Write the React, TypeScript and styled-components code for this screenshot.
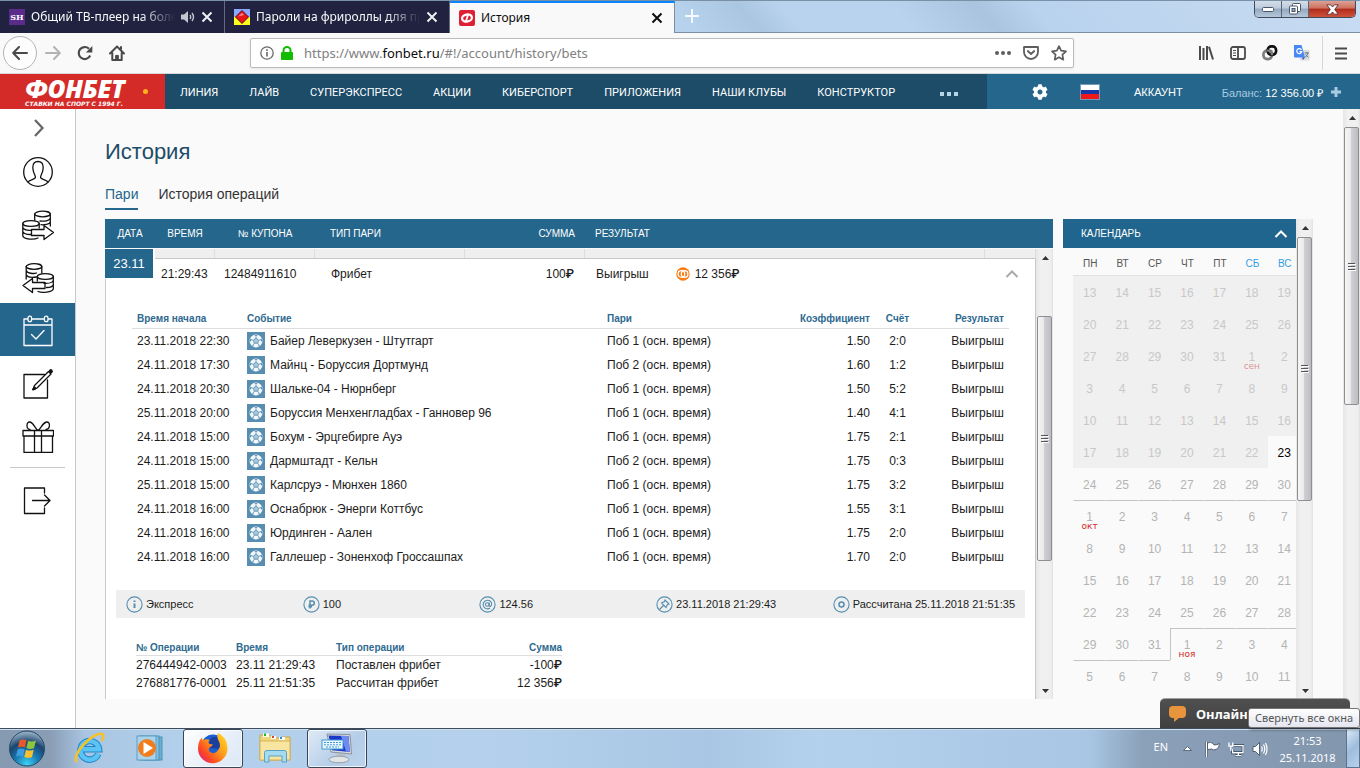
import React from "react";
import styled, { createGlobalStyle, css } from "styled-components";
import { FaCog } from "react-icons/fa";

const SANS = '"Liberation Sans", Arial, sans-serif';
const UI = '"Noto Sans", "Open Sans", sans-serif';
const BLUE = "#25668c";
const NAVY = "#1c4c68";

const Global = createGlobalStyle`
  *, *::before, *::after { box-sizing: border-box; }
  html, body { margin: 0; padding: 0; }
  body { font-family: ${SANS}; font-size: 12px; color: #1c1c1c; background: #fafafa; }
  button { font: inherit; color: inherit; background: none; border: 0; padding: 0; margin: 0; }
  a { color: inherit; text-decoration: none; }
  table { border-spacing: 0; border-collapse: separate; table-layout: fixed; width: 100%; }
  th, td { padding: 0; font-weight: normal; text-align: left; }
  svg { display: block; flex: none; }
`;

const Screen = styled.div`
  display: flex;
  flex-direction: column;
  height: 100vh;
  overflow: hidden;
`;

/* ---------- browser window ---------- */

const TabStrip = styled.header`
  display: flex;
  flex: none;
  height: 33px;
  border-top: 1px solid #7990a6;
  background: linear-gradient(48deg, #b7d2ed 0 38%, #a9c4df 45%, #b7d2ed 47% 50%, #abc6e0 55%, #b9d3ee 58% 66%, #aac4e0 72%, #b9d2ed 76%, #c8dcf2 100%);
`;

const BrowserTab = styled.div<{ $active?: boolean }>`
  display: flex;
  align-items: center;
  gap: 6px;
  width: 225px;
  padding: 0 11px 0 9px;
  font-family: ${UI};
  font-size: 12px;
  color: ${(p) => (p.$active ? "#0c0c0d" : "#f9f9fa")};
  background: ${(p) => (p.$active ? "#f9f9f9" : "#20223f")};
  border-right: 1px solid ${(p) => (p.$active ? "#7c8fa5" : "#666a80")};
  border-top: ${(p) => (p.$active ? "2px solid #0a84ff" : "0")};
`;

const TabTitle = styled.span<{ $fade?: boolean }>`
  flex: 1;
  min-width: 0;
  overflow: hidden;
  white-space: nowrap;
  line-height: 20px;
  ${(p) => p.$fade && css`mask-image: linear-gradient(to left, transparent, #000 34px);`}
`;

const IconButton = styled.button`
  display: flex;
  align-items: center;
  justify-content: center;
  flex: none;
`;

const StripRest = styled.div`
  display: flex;
  flex: 1;
  justify-content: space-between;
  align-items: flex-start;
  padding: 0 4px 0 9px;
  border-bottom: 1px solid #7c8fa5;
`;

const NewTab = styled(IconButton)`
  width: 16px;
  height: 30px;
`;

const WindowButtons = styled.div`
  display: flex;
  height: 17px;
  border: 1px solid #3f4b5a;
  border-top: 0;
  border-radius: 0 0 5px 5px;
  overflow: hidden;
`;

const WindowButton = styled.button<{ $close?: boolean }>`
  display: flex;
  align-items: center;
  justify-content: center;
  width: ${(p) => (p.$close ? "46px" : "27px")};
  border-right: ${(p) => (p.$close ? "0" : "1px solid #5a6676")};
  background: ${(p) =>
    p.$close
      ? "linear-gradient(#dba295, #cf6f5f 45%, #b02c1c 50%, #d0523a)"
      : "linear-gradient(#d3dde9, #bccbdc 45%, #94a8bf 50%, #b5c7da)"};
`;

const Toolbar = styled.div`
  display: flex;
  align-items: center;
  flex: none;
  height: 41px;
  padding: 0 13px 0 3px;
  background: #f9f9f9;
  border-bottom: 1px solid #d4d6d8;
`;

const NavButtons = styled.div`
  display: flex;
  align-items: center;
  gap: 16px;
  margin-right: 125px;
`;

const BackButton = styled(IconButton)`
  width: 34px;
  height: 34px;
  margin-right: -8px;
  border: 1px solid #b4b4b4;
  border-radius: 50%;
  background: #fdfdfd;
`;

const UrlField = styled.div`
  display: flex;
  align-items: center;
  flex: 1;
  height: 30px;
  padding: 0 6px 0 9px;
  background: #fff;
  border: 1px solid #bcbcbc;
  border-radius: 2px;
  box-shadow: 0 1px 3px rgba(0, 0, 0, 0.08);
`;

const UrlText = styled.span`
  flex: 1;
  margin-left: 6px;
  font-family: ${UI};
  font-size: 13px;
  line-height: 20px;
  color: #808080;
  b { font-weight: normal; color: #0c0c0d; }
`;

const FieldIcons = styled.div`
  display: flex;
  align-items: center;
  gap: 12px;
`;

const ToolIcons = styled.div`
  display: flex;
  align-items: center;
  gap: 16px;
  margin-left: 124px;
`;

const ToolDivider = styled.i`
  width: 1px;
  height: 34px;
  margin: 0 -4px;
  background: #d7d7db;
`;

/* ---------- site header ---------- */

const SiteBar = styled.nav`
  display: flex;
  flex: none;
  height: 35px;
  font-family: Roboto, ${SANS};
  font-size: 11px;
  color: #fff;
  background: ${NAVY};
`;

const Logo = styled.a`
  display: flex;
  align-items: center;
  gap: 15px;
  width: 165px;
  padding-left: 25px;
  background: #d52b28;
`;

const LogoText = styled.span`
  display: flex;
  flex-direction: column;
  width: 103px;
  white-space: nowrap;
  strong { font: italic 900 25px/24px ${UI}; }
  small { font: italic bold 6px/8px "DejaVu Sans", sans-serif; }
`;

const LogoDot = styled.i`
  width: 5px;
  height: 5px;
  border-radius: 50%;
  background: #ffb01e;
`;

const Menu = styled.div`
  display: flex;
  flex: 1;
  align-items: center;
  gap: 31px;
  padding: 1px 15px 0;
  white-space: nowrap;
`;

const MoreButton = styled(IconButton)`
  margin: 4px 0 0 14px;
`;

const AccountBar = styled.div`
  display: flex;
  align-items: center;
  width: 373px;
  padding: 1px 18px 0 45px;
  white-space: nowrap;
  font-family: ${SANS};
  background: ${BLUE};
`;

const AccountLink = styled.a`
  margin: 0 39px 0 34px;
`;

const Flag = styled.button`
  width: 20px;
  height: 16px;
  margin-left: 32px;
  border: 1px solid #6f9cb8;
  background: linear-gradient(#fff 0 33%, #1739a6 33% 66%, #f01818 66%);
`;

const Balance = styled.span`
  margin-right: 8px;
  color: #a9cbe0;
  b { font-weight: normal; color: #fff; }
`;

/* ---------- page ---------- */

const Page = styled.div`
  display: flex;
  flex: 1;
  min-height: 0;
`;

const Sidebar = styled.aside`
  display: flex;
  flex-direction: column;
  flex: none;
  width: 76px;
  background: #fff;
  border-right: 1px solid #c8c8c8;
`;

const SideButton = styled.button<{ $active?: boolean; $short?: boolean }>`
  display: flex;
  align-items: center;
  justify-content: center;
  height: ${(p) => (p.$short ? "35px" : "53px")};
  padding-top: 2px;
  color: ${(p) => (p.$active ? "#fff" : "#111")};
  background: ${(p) => (p.$active ? BLUE : "transparent")};
`;

const SideRule = styled.hr`
  width: 55px;
  margin: 5px 10px;
  border: 0;
  border-top: 1px solid #c8c8c8;
`;

const Content = styled.main`
  display: flex;
  flex: 1;
  flex-direction: column;
  min-width: 0;
  padding: 28px 30px 29px 29px;
  background: #fafafa;
`;

const Title = styled.h1`
  margin: 0;
  font-size: 22px;
  line-height: 30px;
  font-weight: normal;
  color: ${NAVY};
`;

const PageTabs = styled.div`
  display: flex;
  gap: 20px;
  height: 27px;
  margin: 16px 0 9px;
`;

const PageTab = styled.a<{ $active?: boolean }>`
  font-size: 14px;
  line-height: 22px;
  color: ${(p) => (p.$active ? BLUE : "#333")};
  border-bottom: ${(p) => (p.$active ? `2px solid ${BLUE}` : "0")};
`;

const Columns = styled.div`
  display: flex;
  flex: 1;
  gap: 10px;
  min-height: 0;
`;

const History = styled.section`
  display: flex;
  flex: 1;
  flex-direction: column;
  min-width: 0;
`;

const HeadTable = styled.table`
  flex: none;
  height: 29px;
  color: #fff;
  font-size: 10px;
  background: ${BLUE};
`;

const Th = styled.th<{ $align?: string; $pad?: string }>`
  text-align: ${(p) => p.$align || "left"};
  padding: ${(p) => p.$pad || "0"};
  white-space: nowrap;
`;

const Scroller = styled.div`
  display: flex;
  flex: 1;
  min-height: 0;
  margin-top: 1px;
  background: #fff;
`;

const ScrollView = styled.div`
  position: relative;
  flex: 1;
  min-width: 0;
  overflow: hidden;
`;

const DateBadge = styled.div`
  position: absolute;
  left: 0;
  top: 0;
  width: 48px;
  height: 30px;
  font-size: 13px;
  line-height: 29px;
  text-align: center;
  color: #fff;
  background: ${BLUE};
  border-bottom: 1px solid #fff;
`;

const PrevCell = styled.td<{ $blank?: boolean }>`
  height: 9px;
  background: ${(p) => (p.$blank ? "#fff" : "#efefef")};
  border-right: ${(p) => (p.$blank ? "0" : "1px solid #dedede")};
`;

const BetCell = styled.td<{ $first?: boolean; $last?: boolean; $align?: string; $pad?: string }>`
  height: 30px;
  text-align: ${(p) => p.$align || "left"};
  padding: ${(p) => p.$pad || "0"};
  border-top: ${(p) => (p.$first ? "0" : "1px solid #c8c8c8")};
  border-left: ${(p) => (p.$first ? "1px solid #c8c8c8" : "0")};
  border-right: ${(p) => (p.$last ? "1px solid #c8c8c8" : "0")};
`;

const Rub = styled.span`
  font-family: Roboto, sans-serif;
  font-weight: 500;
  line-height: 12px;
`;

const ResultLine = styled.div`
  display: flex;
  align-items: center;
  svg { margin: 0 5px 0 27px; }
`;

const Details = styled.td`
  height: 600px;
  padding: 20px 10px 0;
  vertical-align: top;
  border-left: 1px solid #c8c8c8;
  border-right: 1px solid #c8c8c8;
`;

const Matches = styled.div`
  padding: 0 16px;
`;

const SmallTh = styled.th<{ $align?: string; $inset?: string }>`
  height: ${(p) => (p.$inset ? "21px" : "16px")};
  padding: 0 ${(p) => p.$inset || "0"};
  font-size: 10px;
  font-weight: bold;
  color: #2f6a90;
  text-align: ${(p) => p.$align || "left"};
  border-bottom: 1px solid #dedede;
`;

const MatchTd = styled.td<{ $align?: string }>`
  height: 24px;
  padding: 0 5px;
  text-align: ${(p) => p.$align || "left"};
  white-space: nowrap;
`;

const Event = styled.div`
  display: flex;
  align-items: center;
  gap: 5px;
`;

const Summary = styled.div`
  display: grid;
  grid-template-columns: repeat(4, 1fr) auto;
  align-items: center;
  height: 28px;
  margin: 21px 0 22px;
  padding: 0 10px;
  font-size: 11px;
  background: #efefef;
`;

const SummaryItem = styled.span`
  display: flex;
  align-items: center;
  gap: 3px;
`;

const Operations = styled.div`
  width: 426px;
  margin-left: 20px;
`;

const OpTd = styled.td<{ $align?: string }>`
  height: 18px;
  text-align: ${(p) => p.$align || "left"};
  white-space: nowrap;
`;

/* ---------- calendar ---------- */

const CalendarBox = styled.aside`
  display: flex;
  flex: none;
  width: 250px;
`;

const CalendarBody = styled.div`
  flex: 1;
  min-width: 0;
  overflow: hidden;
`;

const CalendarHead = styled.button`
  display: flex;
  align-items: center;
  justify-content: space-between;
  width: 100%;
  height: 29px;
  padding: 0 8px 0 18px;
  font-size: 10px;
  color: #fff;
  background: #20658e;
`;

const CalendarTable = styled.table`
  width: calc(100% - 6px);
  margin-left: 10px;
  color: #b4b4b4;
`;

const WeekDay = styled.th<{ $weekend?: boolean }>`
  height: 28px;
  padding: 4px 0 0 2px;
  font-size: 10px;
  text-align: center;
  color: ${(p) => (p.$weekend ? "#2f9fe8" : "#555")};
  border-bottom: 1px solid #e2e2e2;
`;

const Day = styled.td<{ $past?: boolean; $today?: boolean; $top?: boolean; $left?: boolean }>`
  height: 32px;
  font-size: 12px;
  line-height: 14px;
  text-align: center;
  vertical-align: top;
  padding: 9px 0 0;
  border-top: 1px solid ${(p) => (p.$top ? "#c4c4c4" : "transparent")};
  border-left: 1px solid ${(p) => (p.$left ? "#c4c4c4" : "transparent")};
  color: ${(p) => (p.$today ? "#000" : p.$past ? "#c8c8c8" : "#b4b4b4")};
  background: ${(p) => (p.$past ? "#f0f0f0" : "#fafafa")};
`;

const Month = styled.small<{ $past?: boolean }>`
  display: block;
  margin-top: -2px;
  font: 9px/8px "DejaVu Sans", sans-serif;
  color: ${(p) => (p.$past ? "#d89a98" : "#d62824")};
`;

/* ---------- scrollbar ---------- */

const Track = styled.div`
  display: flex;
  flex: none;
  flex-direction: column;
  width: 17px;
  padding-left: 1px;
  background: linear-gradient(to right, #e6e6e6, #f1f1f1 30%, #efefef 85%, #e2e2e2);
`;

const ArrowButton = styled.button`
  display: flex;
  align-items: center;
  justify-content: center;
  height: 17px;
`;

const TrackGap = styled.i<{ $grow: number }>`
  flex: ${(p) => p.$grow} 0 0;
`;

const Thumb = styled.div<{ $grow: number }>`
  display: flex;
  align-items: center;
  justify-content: center;
  flex: ${(p) => p.$grow} 0 0;
  width: 15px;
  border: 1px solid #8f8f8f;
  border-radius: 2px;
  background: linear-gradient(to right, #f6f6f6, #e9e9eb 45%, #cfcfd3 50%, #bcbcc2);
`;

function Scrollbar({ before, thumb, after }: { before: number; thumb: number; after: number }) {
  return (
    <Track>
      <ArrowButton aria-label="Вверх">
        <svg width="7" height="4"><path d="M0 4 L3.5 0 L7 4Z" fill="#333" /></svg>
      </ArrowButton>
      <TrackGap $grow={before} />
      <Thumb $grow={thumb}>
        <svg width="8" height="9" viewBox="0 0 8 9">
          <path d="M0 1.5H7M0 4.5H7M0 7.5H7" stroke="#555" strokeWidth="1" />
          <path d="M1 2.5H8M1 5.5H8M1 8.5H8" stroke="#fff" strokeWidth="1" />
        </svg>
      </Thumb>
      <TrackGap $grow={after} />
      <ArrowButton aria-label="Вниз">
        <svg width="7" height="4"><path d="M0 0 L3.5 4 L7 0Z" fill="#333" /></svg>
      </ArrowButton>
    </Track>
  );
}

/* ---------- overlays and taskbar ---------- */

const Chat = styled.button`
  position: absolute;
  right: 10px;
  bottom: 40px;
  display: flex;
  align-items: center;
  gap: 10px;
  width: 190px;
  height: 30px;
  padding: 0 9px;
  border-top: 1px solid #a0a0a0;
  border-radius: 5px 5px 0 0;
  font: bold 13px/16px "Noto Sans", sans-serif;
  color: #fff;
  background: linear-gradient(#505050, #404040);
`;

const Tooltip = styled.div`
  position: absolute;
  right: 0;
  bottom: 40px;
  height: 20px;
  padding: 0 6px;
  font: 11px/18px ${UI};
  color: #575757;
  white-space: nowrap;
  border: 1px solid #767676;
  border-radius: 3px;
  background: linear-gradient(#fff, #e4e5f0);
  box-shadow: 1px 2px 3px rgba(0, 0, 0, 0.35);
`;

const Taskbar = styled.footer`
  display: flex;
  align-items: stretch;
  flex: none;
  height: 40px;
  border-top: 1px solid #3d4d5e;
  box-shadow: inset 0 1px 0 #cfe0f0;
  background: linear-gradient(to right, #8599b0 0, #899db4 50px, #a9c5e2 85px, #b2cfec 180px, #b4d0ec 36%, #a9c6e4 52%, #b3d0ec 60%, #a9c7e5 80%, #8ba1b9 84%, #8498b0 96%, #8296ad);
`;

const TaskButton = styled.button<{ $state?: "on" | "open" }>`
  display: flex;
  align-items: center;
  justify-content: center;
  width: 60px;
  padding-bottom: 2px;
  margin-right: 2px;
  border-radius: 3px;
  border: ${(p) => (p.$state ? "1px solid #39465a" : "0")};
  box-shadow: ${(p) => (p.$state ? "inset 0 0 0 1px rgba(255,255,255,.75)" : "none")};
  background: ${(p) =>
    p.$state === "on"
      ? "linear-gradient(135deg, #fff, #e6eef8 60%, #dde9f6)"
      : p.$state === "open"
      ? "linear-gradient(135deg, #dfeaf6, #b5cde8 60%, #bcd3ec)"
      : "none"};
`;

const StartButton = styled(IconButton)`
  width: 54px;
  margin-right: 5px;
`;

const Tray = styled.div`
  display: flex;
  align-items: center;
  margin-left: auto;
  font: 11px/17px ${UI};
  color: #fff;
`;

const TrayIcons = styled.div`
  display: flex;
  align-items: center;
  gap: 8px;
`;

const Lang = styled.button`
  align-self: flex-start;
  margin: 9px 15px 0 0;
`;

const Clock = styled.time`
  width: 78px;
  padding-left: 1px;
  text-align: center;
`;

const ShowDesktop = styled.button`
  align-self: stretch;
  width: 14px;
  border: 1px solid #5c7390;
  border-top-color: #dfeaf5;
  background: linear-gradient(135deg, #dbe9f7, #9fbcdc 50%, #b9d2ec);
`;

/* ---------- icons ---------- */

const Cross = ({ color }: { color: string }) => (
  <svg width="12" height="12" viewBox="0 0 12 12" stroke={color} strokeWidth="2"><path d="M1.5 1.5 10.5 10.5M10.5 1.5 1.5 10.5" /></svg>
);

const Sound = () => (
  <svg width="14" height="12" viewBox="0 0 14 12"><path d="M0 3.5H3L7 0V12L3 8.5H0Z" fill="#c4c5cf" /><path d="M9 4q1.4 2 0 4M11 2q3 4 0 8" fill="none" stroke="#c4c5cf" strokeWidth="1.4" /></svg>
);

const Ball = () => (
  <svg width="18" height="18" viewBox="0 0 18 18">
    <rect width="18" height="18" fill="#568db0" />
    <circle cx="9" cy="9" r="6.5" fill="#f1f7fb" />
    <path d="M9 6.200 11.700 8.200 10.700 11.300H7.300L6.300 8.200Z" fill="#a9c8da" stroke="#568db0" strokeWidth=".8" />
    <path d="M9 6.200V4.200M11.700 8.200 13.600 7.500M10.700 11.300 11.900 13M7.300 11.300 6.100 13M6.300 8.200 4.400 7.500" stroke="#568db0" strokeWidth=".8" />
    <path d="M7.200 3 9 4.200 10.800 3ZM15 6.600 13.600 7.500 14 9.500 15.300 9.300ZM13.500 13.400 11.900 13 10.800 14.800ZM4.500 13.400 6.100 13 7.200 14.800ZM3 6.600 4.400 7.500 4 9.500 2.700 9.300Z" fill="#568db0" />
  </svg>
);

const Token = () => (
  <svg width="14" height="14" viewBox="0 0 14 14">
    <circle cx="7" cy="7" r="6.700" fill="#f97c14" />
    <g fill="none" stroke="#fff" strokeWidth="1.300"><circle cx="5.400" cy="7" r="3.300" /><circle cx="8.600" cy="7" r="3.300" /></g>
  </svg>
);

const Ring = ({ children }: { children: React.ReactNode }) => (
  <svg width="17" height="17" viewBox="0 0 17 17" fill="none" stroke="#568db0" strokeWidth="1.100">
    <circle cx="8.500" cy="8.500" r="7.600" />
    {children}
  </svg>
);

const SideSvg = ({ children }: { children: React.ReactNode }) => (
  <svg width="32" height="32" viewBox="0 0 32 32" fill="none" stroke="currentColor" strokeWidth="1.300" strokeLinejoin="round" strokeLinecap="round">{children}</svg>
);

const UserIcon = () => (
  <SideSvg>
    <circle cx="16" cy="16" r="14.300" />
    <path d="M6 26C8 23.500 13 23.500 13.400 21.500C13.800 19.500 10.800 17 10.800 11.500C10.800 8 12.500 5.500 16 5.500C19.500 5.500 21.200 8 21.200 11.500C21.200 17 18.200 19.500 18.600 21.500C19 23.500 24 23.500 26 26" />
  </SideSvg>
);

const CoinsOut = () => (
  <SideSvg>
    <ellipse cx="20.500" cy="5" rx="7.800" ry="2.800" />
    <path d="M12.700 5V11M28.300 5V17M28.300 9C28 12 22 12.500 18 12M28.300 13C27.500 15.500 22 16 19 15.700" />
    <ellipse cx="9" cy="14.500" rx="8.200" ry="2.900" />
    <path d="M.8 14.500V27C2 30.500 12 31 16 29M17.200 14.500V19M.8 18.500C2 21 7 21.400 9 21.300M.8 22.700C2 25 6 25.600 9 25.500" />
    <path d="M9.500 20.500H22V16.500L31.500 23.500L22 30.500V26.500H9.500Z" />
  </SideSvg>
);

const CoinsIn = () => (
  <SideSvg>
    <ellipse cx="12" cy="4.500" rx="7.800" ry="2.800" />
    <path d="M4.200 4.500V17M19.800 4.500V11M4.200 8.500C5 11.500 12 12 14.500 11M4.200 12.500C5 15 9 15.800 14.500 15" />
    <ellipse cx="23.300" cy="14.500" rx="8" ry="2.900" />
    <path d="M31.300 14.500V27C30 30.500 20 31 16 29.500M15.300 14.500V19M31.300 18.500C30 21 25 21.600 22 21.300M31.300 22.700C30 25.300 27 25.600 24.500 25.500" />
    <path d="M23 20.500H10.500V16.500L1 23.500L10.500 30.500V26.500H23Z" />
  </SideSvg>
);

const CalendarIcon = () => (
  <SideSvg>
    <path d="M5.500 4H2V30.500H30V4H26.500M10 4H22M2 10H30" />
    <rect x="6" y="1.200" width="3.600" height="5.500" rx="1.700" />
    <rect x="22.400" y="1.200" width="3.600" height="5.500" rx="1.700" />
    <path d="M9.500 19.500 14 24 22 15.500" />
  </SideSvg>
);

const EditIcon = () => (
  <SideSvg>
    <path d="M22.500 6.500H2V30H25.500V12" />
    <path d="M11 21.500 12.500 17.500 26.500 3.500 29 6 15 20Z" />
    <path d="M28.800 3.200 28.900 3.300" strokeWidth="4" />
    <path d="M11 21.500 12.500 19.500 13.500 20.500Z" strokeWidth="2" />
  </SideSvg>
);

const GiftIcon = () => (
  <SideSvg>
    <path d="M1 9.500H31.500V15H1ZM2 15V31.500H30.500V15M12.500 9.500V31.500M19.500 9.500V31.500" />
    <path d="M16 9.300C13 8 12 2 8 1C4 .5 4 8 8 8.500M16 9.300C19 8 20 2 24.500 1C28.500 .5 28.500 8 24 8.500" />
  </SideSvg>
);

const ExitIcon = () => (
  <SideSvg>
    <path d="M22.500 8V3H2.500V28.500H22.500V23M10.500 15.500H28M22.500 10 28 15.500 22.500 21" />
  </SideSvg>
);

/* ---------- data ---------- */

const MENU = ["ЛИНИЯ", "ЛАЙВ", "СУПЕРЭКСПРЕСС", "АКЦИИ", "КИБЕРСПОРТ", "ПРИЛОЖЕНИЯ", "НАШИ КЛУБЫ", "КОНСТРУКТОР"];

const MATCHES: [string, string, string, string, string][] = [
  ["23.11.2018 22:30", "Байер Леверкузен - Штутгарт", "Поб 1 (осн. время)", "1.50", "2:0"],
  ["24.11.2018 17:30", "Майнц - Боруссия Дортмунд", "Поб 2 (осн. время)", "1.60", "1:2"],
  ["24.11.2018 20:30", "Шальке-04 - Нюрнберг", "Поб 1 (осн. время)", "1.50", "5:2"],
  ["25.11.2018 20:00", "Боруссия Менхенгладбах - Ганновер 96", "Поб 1 (осн. время)", "1.40", "4:1"],
  ["24.11.2018 15:00", "Бохум - Эрцгебирге Ауэ", "Поб 1 (осн. время)", "1.75", "2:1"],
  ["24.11.2018 15:00", "Дармштадт - Кельн", "Поб 2 (осн. время)", "1.75", "0:3"],
  ["25.11.2018 15:00", "Карлсруэ - Мюнхен 1860", "Поб 1 (осн. время)", "1.75", "3:2"],
  ["24.11.2018 16:00", "Оснабрюк - Энерги Коттбус", "Поб 1 (осн. время)", "1.55", "3:1"],
  ["24.11.2018 16:00", "Юрдинген - Аален", "Поб 1 (осн. время)", "1.75", "2:0"],
  ["24.11.2018 16:00", "Галлешер - Зоненхоф Гроссашпах", "Поб 1 (осн. время)", "1.70", "2:0"],
];

const WEEKDAYS = ["ПН", "ВТ", "СР", "ЧТ", "ПТ", "СБ", "ВС"];
const FIRST_DAY = new Date(2018, 7, 13);
const TODAY_INDEX = 41;
const MONTHS: Record<number, string> = { 8: "сен", 9: "окт", 10: "ноя" };

const WEEKS = Array.from({ length: 13 }, (_, w) =>
  Array.from({ length: 7 }, (_, d) => {
    const index = w * 7 + d;
    const date = new Date(FIRST_DAY.getFullYear(), FIRST_DAY.getMonth(), FIRST_DAY.getDate() + index);
    const past = index < TODAY_INDEX;
    const day = date.getDate();
    return {
      index,
      day,
      past,
      today: index === TODAY_INDEX,
      top: !past && day <= 7 && date.getMonth() > 8,
      left: !past && day === 1 && d > 0,
      month: day === 1 ? MONTHS[date.getMonth()] : undefined,
    };
  })
);

const BetCols = ({ last }: { last: number }) => (
  <colgroup>
    <col width={50} />
    <col width={60} />
    <col width={100} />
    <col width={150} />
    <col width={120} />
    <col />
    <col width={last} />
  </colgroup>
);

const dark = "#4a4a4d";

export default function App() {
  return (
    <Screen>
      <Global />
      <TabStrip>
        <BrowserTab>
          <svg width="16" height="16" viewBox="0 0 16 16"><rect width="16" height="16" fill="#5b2b8c" /><text x="8" y="11" textAnchor="middle" fontFamily="DejaVu Serif" fontWeight="bold" fontSize="8" fill="#fff">SH</text></svg>
          <TabTitle $fade>Общий ТВ-плеер на более</TabTitle>
          <IconButton aria-label="Отключить звук"><Sound /></IconButton>
          <IconButton aria-label="Закрыть вкладку"><Cross color="#f0f0f4" /></IconButton>
        </BrowserTab>
        <BrowserTab>
          <svg width="16" height="16" viewBox="0 0 16 16"><rect width="16" height="8" fill="#8aa8ff" /><rect y="8" width="16" height="8" fill="#ffff1c" /><path d="M8 1.500 14.500 8 8 14.500 1.500 8Z" fill="#e8151b" stroke="#5d0b14" /><path d="M4 7.500 8 4 10 6Z" fill="#ff8c8c" /></svg>
          <TabTitle $fade>Пароли на фрироллы для при</TabTitle>
          <IconButton aria-label="Закрыть вкладку"><Cross color="#f0f0f4" /></IconButton>
        </BrowserTab>
        <BrowserTab $active>
          <svg width="16" height="16" viewBox="0 0 16 16"><rect width="16" height="16" rx="2" fill="#df1f33" /><ellipse cx="8" cy="8" rx="5" ry="3.500" fill="none" stroke="#fff" strokeWidth="2.200" transform="rotate(-12 8 8)" /><path d="M9.300 4 6.700 12" stroke="#fff" strokeWidth="1.800" /></svg>
          <TabTitle>История</TabTitle>
          <IconButton aria-label="Закрыть вкладку"><Cross color="#0c0c0d" /></IconButton>
        </BrowserTab>
        <StripRest>
          <NewTab aria-label="Новая вкладка">
            <svg width="14" height="14" stroke="#f5faff" strokeWidth="2"><path d="M7 0V14M0 7H14" /></svg>
          </NewTab>
          <WindowButtons>
            <WindowButton aria-label="Свернуть"><svg width="12" height="5"><rect x=".5" y=".5" width="11" height="4" rx="1" fill="#fff" stroke="#4a5568" /></svg></WindowButton>
            <WindowButton aria-label="Восстановить"><svg width="12" height="12" viewBox="0 0 12 12" fill="#fff" stroke="#4a5568"><rect x="3.500" y=".5" width="8" height="8" rx="1" /><rect x=".5" y="3" width="8" height="8" rx="1" /><rect x="3" y="5.500" width="3" height="3" fill="#94a8bf" /></svg></WindowButton>
            <WindowButton $close aria-label="Закрыть"><svg width="13" height="11" viewBox="0 0 13 11"><path d="M.8.800H4.500L6.500 3 8.500.800H12.200L8.700 5.500 12.200 10.200H8.500L6.500 8 4.500 10.200H.800L4.300 5.500Z" fill="#fff" stroke="#5b3038" strokeWidth=".9" /></svg></WindowButton>
          </WindowButtons>
        </StripRest>
      </TabStrip>

      <Toolbar>
        <NavButtons>
          <BackButton aria-label="Назад"><svg width="16" height="14" viewBox="0 0 16 14" fill="none" stroke={dark} strokeWidth="2" strokeLinecap="round" strokeLinejoin="round"><path d="M15 7H1.500M7 1 1.200 7 7 13" /></svg></BackButton>
          <IconButton aria-label="Вперёд"><svg width="16" height="14" viewBox="0 0 16 14" fill="none" stroke="#b3b3b5" strokeWidth="2" strokeLinecap="round" strokeLinejoin="round"><path d="M1 7H14.500M9 1 14.800 7 9 13" /></svg></IconButton>
          <IconButton aria-label="Обновить"><svg width="16" height="16" viewBox="0 0 16 16" fill="none" stroke={dark} strokeWidth="2.200"><path d="M13.200 10.500A6 6 0 1 1 12 3.800" /><path d="M15.300 1V7.500H8.800Z" fill={dark} stroke="none" /></svg></IconButton>
          <IconButton aria-label="Домой"><svg width="16" height="16" viewBox="0 0 16 16" fill="none" stroke={dark} strokeWidth="2" strokeLinejoin="round" strokeLinecap="round"><path d="M1 8.500 8 1.500 15 8.500M3.300 8V15H12.700V8" /><path d="M8 15V10.500M6.800 14V10.800H9.200V14" strokeWidth="1.400" /><path d="M12 2V4" /></svg></IconButton>
        </NavButtons>
        <UrlField role="textbox" aria-label="Адрес">
          <svg width="14" height="14" viewBox="0 0 14 14" fill="none" stroke="#6a6a6c" strokeWidth="1.300"><circle cx="7" cy="7" r="6.200" /><path d="M7 6V10.500M7 3.300V4.900" strokeWidth="1.600" /></svg>
          <svg width="24" height="14" viewBox="0 0 24 14"><path d="M9.500 7V4.500a3.500 3.500 0 0 1 7 0V7" fill="none" stroke="#12bc00" strokeWidth="2" /><rect x="7" y="6" width="12" height="8" rx="1" fill="#12bc00" /></svg>
          <UrlText>https://www.<b>fonbet.ru</b>/#!/account/history/bets</UrlText>
          <FieldIcons>
            <IconButton aria-label="Действия"><svg width="16" height="4" fill="#5e5e60"><circle cx="2" cy="2" r="2" /><circle cx="8" cy="2" r="2" /><circle cx="14" cy="2" r="2" /></svg></IconButton>
            <IconButton aria-label="Pocket"><svg width="16" height="14" viewBox="0 0 16 14" fill="none" stroke="#5e5e60" strokeWidth="1.800" strokeLinejoin="round" strokeLinecap="round"><path d="M1 1H15V6A7 7 0 0 1 1 6Z" /><path d="M4.800 5 8 8 11.200 5" /></svg></IconButton>
            <IconButton aria-label="Закладка"><svg width="16" height="16" viewBox="0 0 16 16" fill="none" stroke="#5e5e60" strokeWidth="1.700" strokeLinejoin="round"><path d="M8 1.200 10.100 5.700 15 6.300 11.400 9.700 12.300 14.700 8 12.300 3.700 14.700 4.600 9.700 1 6.300 5.900 5.700Z" /></svg></IconButton>
          </FieldIcons>
        </UrlField>
        <ToolIcons>
          <IconButton aria-label="Библиотека"><svg width="16" height="14" viewBox="0 0 16 14" stroke={dark} strokeWidth="2"><path d="M2 0V14M5.500 2V14M9 0V14M11 .8 15 13.500" /></svg></IconButton>
          <IconButton aria-label="Боковая панель"><svg width="16" height="14" viewBox="0 0 16 14" fill="none" stroke={dark} strokeWidth="1.800"><rect x="1" y="1" width="14" height="12" rx="2" /><path d="M8 1V13" /><path d="M3 4.500H6M3 7H6M3 9.500H6" strokeWidth="1" /></svg></IconButton>
          <IconButton aria-label="Расширение"><svg width="16" height="16" viewBox="0 0 17 17" fill="none" strokeWidth="2.800"><rect x="1.500" y="6" width="9" height="9" rx="4" stroke="#7d7d80" /><rect x="6" y="1.500" width="9" height="9" rx="4" stroke="#111" /><path d="M5 6H8.500Q10.500 6 10.500 8.500V11" stroke="#7d7d80" strokeWidth="2.400" /></svg></IconButton>
          <IconButton aria-label="Переводчик"><svg width="16" height="16" viewBox="0 0 16 16"><rect x="6" y="5" width="9.500" height="10.500" fill="#dcdcdc" /><path d="M0 0H7.500L11 12.500H1Q0 12.500 0 11.500Z" fill="#4688f4" /><path d="M8 12.500H11L9 15Z" fill="#2a56c6" /><path d="M7.500 5A2.500 2.500 0 1 0 7.700 6.700H5.500" fill="none" stroke="#fff" strokeWidth="1.200" /><path d="M10.500 8H15M12.800 7V8M14 8Q13 11 11 12.500M11.500 9.500 14.500 12.500" stroke="#6b7b8c" fill="none" /></svg></IconButton>
          <ToolDivider />
          <IconButton aria-label="Меню"><svg width="12" height="13" stroke={dark} strokeWidth="2"><path d="M0 1.500H12M0 6.500H12M0 11.500H12" /></svg></IconButton>
        </ToolIcons>
      </Toolbar>

      <SiteBar>
        <Logo href="#">
          <LogoText><strong>ФОНБЕТ</strong><small>СТАВКИ НА СПОРТ С 1994 Г.</small></LogoText>
          <LogoDot />
        </Logo>
        <Menu>
          {MENU.map((m) => <a key={m} href="#">{m}</a>)}
          <MoreButton aria-label="Ещё"><svg width="18" height="4" fill="#b5d4e4"><rect width="4" height="4" /><rect x="7" width="4" height="4" /><rect x="14" width="4" height="4" /></svg></MoreButton>
        </Menu>
        <AccountBar>
          <IconButton aria-label="Настройки"><FaCog size={16} /></IconButton>
          <Flag aria-label="Русский" />
          <AccountLink href="#">АККАУНТ</AccountLink>
          <Balance>Баланс: <b>12 356.00 ₽</b></Balance>
          <IconButton aria-label="Пополнить"><svg width="10" height="10" stroke="#a9cbe0" strokeWidth="3"><path d="M5 0V10M0 5H10" /></svg></IconButton>
        </AccountBar>
      </SiteBar>

      <Page>
        <Sidebar>
          <SideButton $short aria-label="Развернуть"><svg width="14" height="18" viewBox="0 0 14 18" fill="none" stroke="#666" strokeWidth="2.200"><path d="M4 1 11.500 9 4 17" /></svg></SideButton>
          <SideButton aria-label="Профиль"><UserIcon /></SideButton>
          <SideButton aria-label="Вывод"><CoinsOut /></SideButton>
          <SideButton aria-label="Пополнение"><CoinsIn /></SideButton>
          <SideButton $active aria-label="История"><CalendarIcon /></SideButton>
          <SideButton aria-label="Запросы"><EditIcon /></SideButton>
          <SideButton aria-label="Бонусы"><GiftIcon /></SideButton>
          <SideRule />
          <SideButton aria-label="Выход"><ExitIcon /></SideButton>
        </Sidebar>

        <Content>
          <Title>История</Title>
          <PageTabs>
            <PageTab $active href="#">Пари</PageTab>
            <PageTab href="#">История операций</PageTab>
          </PageTabs>
          <Columns>
            <History>
              <HeadTable>
                <BetCols last={68} />
                <thead>
                  <tr>
                    <Th $align="center">ДАТА</Th>
                    <Th $align="center">ВРЕМЯ</Th>
                    <Th $align="center">№ КУПОНА</Th>
                    <Th $pad="0 0 0 15px">ТИП ПАРИ</Th>
                    <Th $align="right" $pad="0 10px 0 0">СУММА</Th>
                    <Th $pad="0 0 0 10px">РЕЗУЛЬТАТ</Th>
                    <Th />
                  </tr>
                </thead>
              </HeadTable>
              <Scroller>
                <ScrollView>
                  <table>
                    <BetCols last={51} />
                    <tbody>
                      <tr>
                        <PrevCell $blank /><PrevCell /><PrevCell /><PrevCell /><PrevCell /><PrevCell /><PrevCell />
                      </tr>
                      <tr>
                        <BetCell $first />
                        <BetCell $pad="0 0 0 6px">21:29:43</BetCell>
                        <BetCell $pad="0 0 0 9px">12484911610</BetCell>
                        <BetCell $pad="0 0 0 16px">Фрибет</BetCell>
                        <BetCell $align="right" $pad="0 11px 0 0">100<Rub>₽</Rub></BetCell>
                        <BetCell $pad="0 0 0 11px">
                          <ResultLine>
                            Выигрыш
                            <Token />
                            12 356<Rub>₽</Rub>
                          </ResultLine>
                        </BetCell>
                        <BetCell $last $pad="0 0 0 20px">
                          <IconButton aria-label="Свернуть купон"><svg width="14" height="8" fill="none" stroke="#aaa" strokeWidth="2"><path d="M1.500 7 7 1.500 12.500 7" /></svg></IconButton>
                        </BetCell>
                      </tr>
                      <tr>
                        <Details colSpan={7}>
                          <Matches>
                            <table>
                              <colgroup><col width={110} /><col width={360} /><col /><col width={84} /><col width={45} /><col width={89} /></colgroup>
                              <thead>
                                <tr>
                                  <SmallTh $inset="5px">Время начала</SmallTh>
                                  <SmallTh $inset="5px">Событие</SmallTh>
                                  <SmallTh $inset="5px">Пари</SmallTh>
                                  <SmallTh $inset="5px" $align="right">Коэффициент</SmallTh>
                                  <SmallTh $inset="5px" $align="center">Счёт</SmallTh>
                                  <SmallTh $inset="5px" $align="right">Результат</SmallTh>
                                </tr>
                              </thead>
                              <tbody>
                                {MATCHES.map(([time, event, bet, odds, score]) => (
                                  <tr key={event}>
                                    <MatchTd>{time}</MatchTd>
                                    <MatchTd><Event><Ball />{event}</Event></MatchTd>
                                    <MatchTd>{bet}</MatchTd>
                                    <MatchTd $align="right">{odds}</MatchTd>
                                    <MatchTd $align="center">{score}</MatchTd>
                                    <MatchTd $align="right">Выигрыш</MatchTd>
                                  </tr>
                                ))}
                              </tbody>
                            </table>
                          </Matches>
                          <Summary>
                            <SummaryItem><Ring><path d="M8.500 7.500V12M8.500 4.500V6" strokeWidth="2" /></Ring>Экспресс</SummaryItem>
                            <SummaryItem><Ring><path d="M7 12.500V5H9.200a2 2 0 0 1 0 4.200H5.500M5.500 10.800H9" strokeWidth="1.500" /></Ring>100</SummaryItem>
                            <SummaryItem><Ring><circle cx="8.300" cy="8.500" r="1.800" /><path d="M10.200 6.500V9.500Q10.500 10.700 11.700 10.200Q13 9 12.500 7A4.300 4.300 0 1 0 11 12" /></Ring>124.56</SummaryItem>
                            <SummaryItem><Ring><path d="M9 4 13 8 11.500 8.500 10 11.500 5.500 7 8.500 5.500ZM7.500 9.500 3.500 13.500" /></Ring>23.11.2018 21:29:43</SummaryItem>
                            <SummaryItem><Ring><circle cx="8.500" cy="8.500" r="2.500" strokeWidth="1.500" /></Ring>Рассчитана 25.11.2018 21:51:35</SummaryItem>
                          </Summary>
                          <Operations>
                            <table>
                              <colgroup><col width={100} /><col width={100} /><col width={120} /><col /></colgroup>
                              <thead>
                                <tr>
                                  <SmallTh>№ Операции</SmallTh><SmallTh>Время</SmallTh><SmallTh>Тип операции</SmallTh><SmallTh $align="right">Сумма</SmallTh>
                                </tr>
                              </thead>
                              <tbody>
                                <tr><OpTd>276444942-0003</OpTd><OpTd>23.11 21:29:43</OpTd><OpTd>Поставлен фрибет</OpTd><OpTd $align="right">-100<Rub>₽</Rub></OpTd></tr>
                                <tr><OpTd>276881776-0001</OpTd><OpTd>25.11 21:51:35</OpTd><OpTd>Рассчитан фрибет</OpTd><OpTd $align="right">12 356<Rub>₽</Rub></OpTd></tr>
                              </tbody>
                            </table>
                          </Operations>
                        </Details>
                      </tr>
                    </tbody>
                  </table>
                  <DateBadge>23.11</DateBadge>
                </ScrollView>
                <Scrollbar before={50} thumb={244} after={122} />
              </Scroller>
            </History>

            <CalendarBox>
              <CalendarBody>
                <CalendarHead>
                  КАЛЕНДАРЬ
                  <svg width="14" height="8" fill="none" stroke="#fff" strokeWidth="2"><path d="M1.500 7 7 1.500 12.500 7" /></svg>
                </CalendarHead>
                <CalendarTable>
                  <thead>
                    <tr>{WEEKDAYS.map((w, i) => <WeekDay key={w} $weekend={i > 4}>{w}</WeekDay>)}</tr>
                  </thead>
                  <tbody>
                    {WEEKS.map((week) => (
                      <tr key={week[0].index}>
                        {week.map((d) => (
                          <Day key={d.index} $past={d.past} $today={d.today} $top={d.top} $left={d.left}>
                            {d.day}
                            {d.month && <Month $past={d.past}>{d.month}</Month>}
                          </Day>
                        ))}
                      </tr>
                    ))}
                  </tbody>
                </CalendarTable>
              </CalendarBody>
              <Scrollbar before={1} thumb={263} after={182} />
            </CalendarBox>
          </Columns>
        </Content>
        <Scrollbar before={1} thumb={277} after={307} />
      </Page>

      <Chat>
        <svg width="17" height="16" viewBox="0 0 17 16"><path d="M4 0H13Q17 0 17 4V8Q17 12 13 12H10L5 16V12H4Q0 12 0 8V4Q0 0 4 0Z" fill="#e8943c" /></svg>
        Онлайн
      </Chat>
      <Tooltip role="tooltip">Свернуть все окна</Tooltip>

      <Taskbar>
        <StartButton aria-label="Пуск">
          <svg width="38" height="38" viewBox="0 0 38 38">
            <defs><radialGradient id="orb" cx=".5" cy=".95" r=".9"><stop offset="0" stopColor="#3fd2f5" /><stop offset=".4" stopColor="#1877b0" /><stop offset=".7" stopColor="#1b456f" /><stop offset="1" stopColor="#8fa9c0" /></radialGradient></defs>
            <circle cx="19" cy="18.500" r="17.500" fill="url(#orb)" stroke="#274866" />
            <path d="M11.500 10.500Q15 8.500 18.500 10.300L17 17.500Q13.500 16 10 17.700Z" fill="#e8572a" />
            <path d="M20 10.800Q23.500 12.500 28 10.600L26 18Q22.500 19.800 18.500 18Z" fill="#8cc63f" />
            <path d="M9.700 19.300Q13 17.600 16.700 19.200L15 26.500Q11.500 25 8 26.700Z" fill="#3d9be0" />
            <path d="M18 19.700Q21.500 21.500 25.700 19.700L24 27Q20.500 28.700 16.300 27Z" fill="#fbc12d" />
          </svg>
        </StartButton>
        <TaskButton aria-label="Internet Explorer">
          <svg width="32" height="32" viewBox="0 0 32 32">
            <path d="M25.300 22A9.300 9.300 0 1 1 26 17.200H10" fill="none" stroke="#1f86cc" strokeWidth="6.500" />
            <path d="M25.300 22A9.300 9.300 0 1 1 26 17.200H10" fill="none" stroke="#5cc4f4" strokeWidth="4.500" />
            <path d="M4 30C-3 24 20-1 29 2C31.500 3 30 7 29 9" fill="none" stroke="#f5c327" strokeWidth="2.600" />
          </svg>
        </TaskButton>
        <TaskButton aria-label="Проигрыватель">
          <svg width="30" height="28" viewBox="0 0 30 28">
            <rect x="8" y="3" width="18" height="23" fill="#6aaed0" stroke="#4d93b8" /><rect x="4" y="2" width="19" height="24" fill="#85c0de" stroke="#4d93b8" /><rect x="1" y="2" width="19" height="24" fill="#a9d3ea" stroke="#5c9fc2" />
            <circle cx="11" cy="14" r="9" fill="#f07c1e" /><path d="M7.500 8V20L17 14Z" fill="#fff" />
          </svg>
        </TaskButton>
        <TaskButton $state="on" aria-label="Firefox">
          <svg width="32" height="32" viewBox="0 0 32 32">
            <defs><linearGradient id="fx" x1="1" y1="0" x2="0" y2=".9"><stop offset="0" stopColor="#ffe226" /><stop offset=".45" stopColor="#ff9a1a" /><stop offset=".75" stopColor="#fb4a22" /><stop offset="1" stopColor="#e31587" /></linearGradient></defs>
            <circle cx="16" cy="14" r="11.500" fill="#1b5fd0" /><path d="M12 8Q17 2 25 7L24 17 13 16Z" fill="#1c3f9e" />
            <path d="M21 1Q30 5 30.500 16A14.500 14.500 0 0 1 1 17Q1 9 5 5.500L5.500 8.500Q8 6.500 13 8Q10 10 12.500 12L16 12.500Q15 14.500 12.500 15.500Q11 17 12.500 19.500Q17 23 20.500 19Q25 14 21.500 8.500Q19.500 5 21 1Z" fill="url(#fx)" />
          </svg>
        </TaskButton>
        <TaskButton aria-label="Проводник">
          <svg width="34" height="32" viewBox="0 0 34 32">
            <path d="M2 4V3H12L14 6H24V5H32V28H2Z" fill="#f2d778" stroke="#c9a648" /><path d="M5 1.500H11V5H5ZM13 4H18V7H13ZM21 5H27V8H21Z" fill="#fff" /><path d="M6 1.500H8V4H6Z" fill="#26b32e" /><path d="M14 4H16V6H14Z" fill="#d8432c" /><path d="M22 5H24V7H22Z" fill="#2f8ed8" />
            <path d="M2 9H32V28H2Z" fill="#f8e6a0" stroke="#d3b35a" />
            <path d="M6.500 30V20.500Q6.500 18.500 9 18.500H26Q28.500 18.500 28.500 20.500V30H24V24H11V30Z" fill="#a5daf0" stroke="#56a3c8" />
          </svg>
        </TaskButton>
        <TaskButton $state="open" aria-label="Экранная клавиатура">
          <svg width="32" height="32" viewBox="0 0 32 32">
            <path d="M6 2 29 2.500 30.500 22 10 20Z" fill="#d8dade" stroke="#8c9299" /><path d="M7.500 3.500 27.500 4 28.800 20 11 18.300Z" fill="#1a39c8" /><path d="M20 4 27.500 4 28.800 20 25 19.500Z" fill="#6f8af0" />
            <path d="M16 21.500 24 22.500V26H16Z" fill="#b9bec4" /><ellipse cx="18" cy="27.500" rx="10" ry="3.300" fill="#e2e5e8" stroke="#9aa0a7" />
            <rect x="1" y="8" width="21" height="9" fill="#e9f6fd" stroke="#3e9ad6" /><path d="M3 10.500H21M3 12.800H21M5 15H18" stroke="#3e9ad6" strokeDasharray="2 1" />
          </svg>
        </TaskButton>
        <Tray>
          <Lang>EN</Lang>
          <TrayIcons>
            <IconButton aria-label="Скрытые значки"><svg width="13" height="5"><path d="M.5 4.500 4.500.5 8.500 4.500Z" fill="#fff" stroke="#44566b" strokeWidth=".8" /></svg></IconButton>
            <svg width="16" height="18" viewBox="1 0 16 18"><path d="M3.500 1.500V17" stroke="#33465a" strokeWidth="3" /><path d="M3.500 1.500V17" stroke="#fff" strokeWidth="1.500" /><path d="M4.500 3Q8 1.500 10 3.500L11 5Q14 5 16.500 3.500Q16.500 8 13 9.500Q10 10.500 8.500 9L4.500 9.500Z" fill="#fff" stroke="#33465a" strokeWidth=".8" /></svg>
            <svg width="16" height="17" viewBox="0 0 17 17" fill="none"><path d="M6 5.500H16V13H5V9M8 16H14M11 13V16" stroke="#33465a" strokeWidth="3" /><path d="M6 5.500H16V13H5V9M8 16H14M11 13V16M1 2V6H5V2M3 6V11" stroke="#fff" strokeWidth="1.400" /></svg>
            <svg width="16" height="16" viewBox="0 0 16 16"><path d="M1 5.500H3.500L7.500 1.500V14.500L3.500 10.500H1Z" fill="#fff" stroke="#33465a" strokeWidth=".8" /><path d="M9.500 5.500Q11 8 9.500 10.500M11.500 3.500Q14 8 11.500 12.500M13.500 2Q16.500 8 13.500 14" stroke="#fff" fill="none" strokeWidth="1.200" /></svg>
          </TrayIcons>
          <Clock>21:53<br />25.11.2018</Clock>
          <ShowDesktop aria-label="Свернуть все окна" />
        </Tray>
      </Taskbar>
    </Screen>
  );
}
